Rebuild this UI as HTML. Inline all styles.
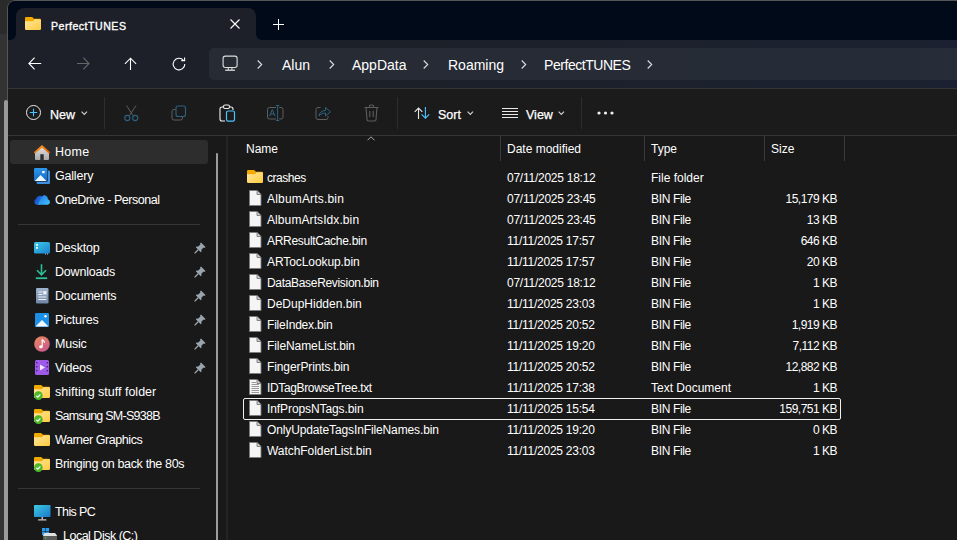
<!DOCTYPE html>
<html><head><meta charset="utf-8">
<style>
*{margin:0;padding:0;box-sizing:border-box}
html,body{width:957px;height:540px;overflow:hidden;background:#2b2b2b;font-family:"Liberation Sans",sans-serif;color:#fff}
.a{position:absolute}
svg{position:absolute;overflow:visible}
#outer2{left:0;top:34px;width:8px;height:506px;background:#333}
#win{left:7px;top:0;width:960px;height:560px;border:1px solid #555;border-radius:8px;background:#191919;overflow:hidden}
#title{left:8px;top:1px;width:949px;height:39px;background:#010a19;border-radius:7px 0 0 0}
#tab{left:16px;top:8px;width:240px;height:40px;background:#1d2029;border-radius:8px 8px 0 0}
#tabcorner1{left:8px;top:32px;width:8px;height:8px;background:#1d2029}
#tabcorner1 div{width:8px;height:8px;background:#010a19;border-radius:0 0 6px 0}
#tabcorner2{left:256px;top:32px;width:8px;height:8px;background:#1d2029}
#tabcorner2 div{width:8px;height:8px;background:#010a19;border-radius:0 0 0 6px}
#addrrow{left:8px;top:40px;width:949px;height:48px;background:linear-gradient(to right,#1d2029,#1c2029 40%,#1b2130)}
#sep1{left:8px;top:88px;width:949px;height:1px;background:#353535}
#cmd{left:8px;top:89px;width:949px;height:46px;background:#1b1b1b}
#sep2{left:8px;top:135px;width:949px;height:1px;background:#353535}
#addr{left:209px;top:48px;width:760px;height:32px;background:linear-gradient(to right,#262b34,#262b35 40%,#262c38);border-radius:5px}
.t14{font-size:14px;line-height:16px;white-space:nowrap}
.t12{font-size:12px;line-height:14px;white-space:nowrap}
.cb{-webkit-text-stroke:0.25px #fff}

.nt{left:55px;font-size:12.5px;letter-spacing:-0.2px;line-height:14px;white-space:nowrap;color:#fff}
.cd{letter-spacing:-0.25px}
.cs{letter-spacing:-0.5px}
.ct{font-size:12px;line-height:14px;white-space:nowrap;color:#fff}
</style></head><body>
<div class="a" id="outer2"></div>
<div class="a" id="win"></div>
<div class="a" id="title"></div>
<div class="a" id="tabcorner1"><div></div></div>
<div class="a" id="tabcorner2"><div></div></div>
<div class="a" id="tab"></div>
<div class="a" id="addrrow"></div>
<div class="a" id="sep1"></div>
<div class="a" id="cmd"></div>
<div class="a" id="sep2"></div>
<div class="a" id="addr"></div>

<!-- tab content -->
<svg style="left:25px;top:17px" width="16" height="13" viewBox="0 0 16 13"><defs><linearGradient id="fg" x1="0" y1="0" x2="1" y2="1"><stop offset="0" stop-color="#ffe7a0"/><stop offset="1" stop-color="#ffcb3d"/></linearGradient></defs><path d="M0 1.2A1.2 1.2 0 0 1 1.2 0H6.8A1 1 0 0 1 7.5 0.3L9 1.8H14.8A1.2 1.2 0 0 1 16 3V6H0Z" fill="#f2aa00"/><path d="M0 4.3H7.6A1 1 0 0 0 8.3 4L9.6 2.3H14.8A1.2 1.2 0 0 1 16 3.5V11.8A1.2 1.2 0 0 1 14.8 13H1.2A1.2 1.2 0 0 1 0 11.8Z" fill="url(#fg)"/></svg>
<div class="a t12" style="left:51px;top:18.5px;font-size:10.6px;letter-spacing:0.5px;-webkit-text-stroke:0.35px #fff">PerfectTUNES</div>
<svg style="left:230px;top:19px" width="10" height="10"><path d="M0.5 0.5L9.5 9.5M9.5 0.5L0.5 9.5" stroke="#fff" stroke-width="1.1"/></svg>
<svg style="left:273px;top:19px" width="12" height="12"><path d="M5.5 0V11M0 5.5H11" stroke="#fff" stroke-width="1"/></svg>

<!-- nav icons -->
<svg style="left:28px;top:57px" width="14" height="14"><path d="M13.2 6.5H1M6.6 0.6L0.9 6.5L6.6 12.4" stroke="#fff" stroke-width="1.1" fill="none"/></svg>
<svg style="left:77px;top:57px" width="14" height="14"><path d="M0 6.5H12.2M6.3 0.6L12 6.5L6.3 12.4" stroke="#666" stroke-width="1.1" fill="none"/></svg>
<svg style="left:124px;top:57px" width="14" height="14"><path d="M6.5 13V1.2M0.9 6.9L6.5 1.2L12.1 6.9" stroke="#fff" stroke-width="1.1" fill="none"/></svg>
<svg style="left:172px;top:57px" width="14" height="14"><path d="M11.4 3.3A5.8 5.8 0 1 0 12.8 7" stroke="#fff" stroke-width="1.1" fill="none"/><path d="M9.3 3.6H12.6V0.4" stroke="#fff" stroke-width="1.1" fill="none"/></svg>

<!-- address -->
<svg style="left:222px;top:55px" width="16" height="16"><rect x="1.1" y="1.1" width="14" height="11.4" rx="2.2" stroke="#ddd" stroke-width="1.1" fill="none"/><path d="M6.3 12.5V14.8M9.9 12.5V14.8" stroke="#ddd" stroke-width="1.1"/><path d="M3.2 15.2H13" stroke="#ddd" stroke-width="1.3"/></svg>
<svg style="left:257px;top:60px" width="6" height="10"><path d="M0.7 0.5L4.7 4.5L0.7 8.5" stroke="#ddd" stroke-width="1.1" fill="none"/></svg>
<div class="a t14" style="left:282px;top:57px">Alun</div>
<svg style="left:329px;top:60px" width="6" height="10"><path d="M0.7 0.5L4.7 4.5L0.7 8.5" stroke="#ddd" stroke-width="1.1" fill="none"/></svg>
<div class="a t14" style="left:352px;top:57px">AppData</div>
<svg style="left:423px;top:60px" width="6" height="10"><path d="M0.7 0.5L4.7 4.5L0.7 8.5" stroke="#ddd" stroke-width="1.1" fill="none"/></svg>
<div class="a t14" style="left:448px;top:57px">Roaming</div>
<svg style="left:521px;top:60px" width="6" height="10"><path d="M0.7 0.5L4.7 4.5L0.7 8.5" stroke="#ddd" stroke-width="1.1" fill="none"/></svg>
<div class="a t14" style="left:544px;top:57px;letter-spacing:-0.45px">PerfectTUNES</div>
<svg style="left:647px;top:60px" width="6" height="10"><path d="M0.7 0.5L4.7 4.5L0.7 8.5" stroke="#ddd" stroke-width="1.1" fill="none"/></svg>


<!-- command bar -->
<svg style="left:26px;top:105px" width="16" height="16"><circle cx="7.5" cy="7.5" r="7" stroke="#e8e8e8" stroke-width="1" fill="none"/><path d="M7.5 3.8V11.2M3.8 7.5H11.2" stroke="#4cc2ff" stroke-width="1.1"/></svg>
<div class="a t12" style="left:50px;top:108px;font-size:12.5px;-webkit-text-stroke:0.25px #fff">New</div>
<svg style="left:81px;top:111px" width="7" height="5"><path d="M0.6 0.6L3.3 3.3L6 0.6" stroke="#d0d0d0" stroke-width="1.2" fill="none"/></svg>
<div class="a" style="left:104px;top:97px;width:1px;height:32px;background:#2e2e2e"></div>
<svg style="left:124px;top:105px" width="15" height="17"><path d="M2.5 0.5L9 10.5M12 0.5L5.5 10.5" stroke="#5e5e5e" stroke-width="1" fill="none"/><circle cx="3.3" cy="13" r="2.6" stroke="#2d6283" stroke-width="1.1" fill="none"/><circle cx="11.2" cy="13" r="2.6" stroke="#2d6283" stroke-width="1.1" fill="none"/></svg>
<svg style="left:171px;top:105px" width="16" height="16"><path d="M4.5 4.5H3A2 2 0 0 0 1 6.5V13A2 2 0 0 0 3 15H9.5A2 2 0 0 0 11.5 13V12" stroke="#5e5e5e" stroke-width="1" fill="none"/><rect x="5" y="1" width="9.5" height="10.5" rx="2" stroke="#2d6283" stroke-width="1.1" fill="none"/></svg>
<svg style="left:219px;top:104px" width="17" height="18"><path d="M4 3H3A2 2 0 0 0 1 5V15A2 2 0 0 0 3 17H6M11 3H12A2 2 0 0 1 14 5V6" stroke="#f0f0f0" stroke-width="1.1" fill="none"/><rect x="4.5" y="1" width="6" height="3.5" rx="1.5" stroke="#f0f0f0" stroke-width="1.1" fill="none"/><rect x="7.5" y="7" width="8" height="10.2" rx="1.6" stroke="#4cc2ff" stroke-width="1.2" fill="none"/></svg>
<svg style="left:267px;top:105px" width="17" height="17"><path d="M9 2.5H2.5A2 2 0 0 0 0.5 4.5V12A2 2 0 0 0 2.5 14H9M12.3 2.5H14A2 2 0 0 1 16 4.5V12A2 2 0 0 1 14 14H12.3" stroke="#5e5e5e" stroke-width="1" fill="none"/><path d="M10.6 0.5V15.5M9 0.5H12.2M9 15.5H12.2M2.6 11.2L5.3 4.6L8 11.2M3.5 9H7.1" stroke="#2d6283" stroke-width="1" fill="none"/></svg>
<svg style="left:315px;top:105px" width="17" height="16"><path d="M5.5 2.5H3A2 2 0 0 0 1 4.5V12.5A2 2 0 0 0 3 14.5H11A2 2 0 0 0 13 12.5V11" stroke="#5e5e5e" stroke-width="1" fill="none"/><path d="M4 11C4.5 7.5 7 5.5 10.5 5.5V2.5L15.5 6.8L10.5 11V8C8 8 5.5 9 4 11Z" stroke="#2d6283" stroke-width="1" fill="none" stroke-linejoin="round"/></svg>
<svg style="left:364px;top:104px" width="15" height="18"><path d="M0.5 3.5H14.5M5.5 3.5V2A1 1 0 0 1 6.5 1H8.5A1 1 0 0 1 9.5 2V3.5M2 3.5L3 15.5A1.5 1.5 0 0 0 4.5 17H10.5A1.5 1.5 0 0 0 12 15.5L13 3.5M5.8 7V13M9.2 7V13" stroke="#5e5e5e" stroke-width="1.1" fill="none"/></svg>
<div class="a" style="left:397px;top:97px;width:1px;height:32px;background:#2e2e2e"></div>
<svg style="left:413px;top:107px" width="18" height="13"><path d="M5.5 12V1M1.7 4.8L5.5 1L9.3 4.8" stroke="#e8e8e8" stroke-width="1.1" fill="none"/><path d="M12.4 0V11.2M8.6 7.4L12.4 11.2L16.2 7.4" stroke="#4cc2ff" stroke-width="1.1" fill="none"/></svg>
<div class="a t12" style="left:438px;top:108px;font-size:12.5px;-webkit-text-stroke:0.25px #fff">Sort</div>
<svg style="left:467px;top:111px" width="7" height="5"><path d="M0.6 0.6L3.3 3.3L6 0.6" stroke="#d0d0d0" stroke-width="1.2" fill="none"/></svg>
<svg style="left:502px;top:107px" width="16" height="13"><path d="M0 1.5H16M0 4.5H16M0 7.5H16M0 10.5H16" stroke="#e8e8e8" stroke-width="1.1"/></svg>
<div class="a t12" style="left:526px;top:108px;font-size:12.5px;-webkit-text-stroke:0.25px #fff">View</div>
<svg style="left:558px;top:111px" width="7" height="5"><path d="M0.6 0.6L3.3 3.3L6 0.6" stroke="#d0d0d0" stroke-width="1.2" fill="none"/></svg>
<div class="a" style="left:581px;top:97px;width:1px;height:32px;background:#2e2e2e"></div>
<svg style="left:597px;top:111px" width="18" height="4"><circle cx="2" cy="2" r="1.6" fill="#f0f0f0"/><circle cx="8.5" cy="2" r="1.6" fill="#f0f0f0"/><circle cx="15" cy="2" r="1.6" fill="#f0f0f0"/></svg>

<!-- left edge bar -->
<div class="a" style="left:4px;top:100px;width:4px;height:440px;background:#9a9a9a;border-radius:2px 2px 0 0"></div>
<!-- nav pane -->
<div class="a" style="left:10px;top:140px;width:198px;height:24px;background:#2d2d2d;border-radius:3px"></div>
<div class="a" style="left:216px;top:153px;width:2px;height:390px;background:#9c9c9c;border-radius:1px"></div>
<div class="a" style="left:226px;top:136px;width:2px;height:404px;background:#242424"></div>
<div class="a" style="left:18px;top:224px;width:182px;height:1px;background:#363636"></div>
<div class="a" style="left:18px;top:488px;width:182px;height:1px;background:#363636"></div>
<div id="navtext">
<div class="a nt" style="top:145px;letter-spacing:0.3px">Home</div>
<div class="a nt" style="top:169px">Gallery</div>
<div class="a nt" style="top:193px;letter-spacing:-0.45px">OneDrive - Personal</div>
<div class="a nt" style="top:241px">Desktop</div>
<div class="a nt" style="top:265px">Downloads</div>
<div class="a nt" style="top:289px">Documents</div>
<div class="a nt" style="top:313px">Pictures</div>
<div class="a nt" style="top:337px">Music</div>
<div class="a nt" style="top:361px">Videos</div>
<div class="a nt" style="top:385px;letter-spacing:0px">shifting stuff folder</div>
<div class="a nt" style="top:409px;letter-spacing:-0.75px">Samsung SM-S938B</div>
<div class="a nt" style="top:433px;letter-spacing:-0.45px">Warner Graphics</div>
<div class="a nt" style="top:457px;letter-spacing:-0.35px">Bringing on back the 80s</div>
<div class="a nt" style="top:505px;letter-spacing:-0.6px">This PC</div>
<div class="a nt" style="top:529px;left:63px;letter-spacing:-0.5px">Local Disk (C:)</div>
</div>

<!-- content header -->
<svg style="left:367px;top:136px" width="8" height="5"><path d="M0.5 4.3L4 0.8L7.5 4.3" stroke="#aaa" stroke-width="1" fill="none"/></svg>
<div class="a ct" style="left:246px;top:142px">Name</div>
<div class="a" style="left:500px;top:136px;width:1px;height:25px;background:#3a3a3a"></div>
<div class="a ct" style="left:507px;top:142px">Date modified</div>
<div class="a" style="left:644px;top:136px;width:1px;height:25px;background:#3a3a3a"></div>
<div class="a ct" style="left:651px;top:142px">Type</div>
<div class="a" style="left:764px;top:136px;width:1px;height:25px;background:#3a3a3a"></div>
<div class="a ct" style="left:771px;top:142px">Size</div>
<div class="a" style="left:844px;top:136px;width:1px;height:25px;background:#3a3a3a"></div>
<div class="a" style="left:243px;top:398px;width:598px;height:22px;border:1.5px solid #f0f0f0;border-radius:2px"></div>
<div class="a ct" style="left:267px;top:171px;letter-spacing:-0.45px">crashes</div><div class="a ct cd" style="left:507px;top:171px">07/11/2025 18:12</div><div class="a ct" style="left:651px;top:171px">File folder</div><div class="a ct cs" style="right:120px;top:171px"></div>
<div class="a ct" style="left:267px;top:192px;letter-spacing:0.18px">AlbumArts.bin</div><div class="a ct cd" style="left:507px;top:192px">07/11/2025 23:45</div><div class="a ct" style="left:651px;top:192px;letter-spacing:-0.35px">BIN File</div><div class="a ct cs" style="right:120px;top:192px">15,179 KB</div>
<div class="a ct" style="left:267px;top:213px;letter-spacing:0.09px">AlbumArtsIdx.bin</div><div class="a ct cd" style="left:507px;top:213px">07/11/2025 23:45</div><div class="a ct" style="left:651px;top:213px;letter-spacing:-0.35px">BIN File</div><div class="a ct cs" style="right:120px;top:213px">13 KB</div>
<div class="a ct" style="left:267px;top:234px;letter-spacing:-0.29px">ARResultCache.bin</div><div class="a ct cd" style="left:507px;top:234px">11/11/2025 17:57</div><div class="a ct" style="left:651px;top:234px;letter-spacing:-0.35px">BIN File</div><div class="a ct cs" style="right:120px;top:234px">646 KB</div>
<div class="a ct" style="left:267px;top:255px;letter-spacing:-0.08px">ARTocLookup.bin</div><div class="a ct cd" style="left:507px;top:255px">11/11/2025 17:57</div><div class="a ct" style="left:651px;top:255px;letter-spacing:-0.35px">BIN File</div><div class="a ct cs" style="right:120px;top:255px">20 KB</div>
<div class="a ct" style="left:267px;top:276px;letter-spacing:-0.32px">DataBaseRevision.bin</div><div class="a ct cd" style="left:507px;top:276px">07/11/2025 18:12</div><div class="a ct" style="left:651px;top:276px;letter-spacing:-0.35px">BIN File</div><div class="a ct cs" style="right:120px;top:276px">1 KB</div>
<div class="a ct" style="left:267px;top:297px">DeDupHidden.bin</div><div class="a ct cd" style="left:507px;top:297px">11/11/2025 23:03</div><div class="a ct" style="left:651px;top:297px;letter-spacing:-0.35px">BIN File</div><div class="a ct cs" style="right:120px;top:297px">1 KB</div>
<div class="a ct" style="left:267px;top:318px;letter-spacing:-0.2px">FileIndex.bin</div><div class="a ct cd" style="left:507px;top:318px">11/11/2025 20:52</div><div class="a ct" style="left:651px;top:318px;letter-spacing:-0.35px">BIN File</div><div class="a ct cs" style="right:120px;top:318px">1,919 KB</div>
<div class="a ct" style="left:267px;top:339px;letter-spacing:-0.09px">FileNameList.bin</div><div class="a ct cd" style="left:507px;top:339px">11/11/2025 19:20</div><div class="a ct" style="left:651px;top:339px;letter-spacing:-0.35px">BIN File</div><div class="a ct cs" style="right:120px;top:339px">7,112 KB</div>
<div class="a ct" style="left:267px;top:360px;letter-spacing:-0.1px">FingerPrints.bin</div><div class="a ct cd" style="left:507px;top:360px">11/11/2025 20:52</div><div class="a ct" style="left:651px;top:360px;letter-spacing:-0.35px">BIN File</div><div class="a ct cs" style="right:120px;top:360px">12,882 KB</div>
<div class="a ct" style="left:267px;top:381px;letter-spacing:-0.36px">IDTagBrowseTree.txt</div><div class="a ct cd" style="left:507px;top:381px">11/11/2025 17:38</div><div class="a ct" style="left:651px;top:381px">Text Document</div><div class="a ct cs" style="right:120px;top:381px">1 KB</div>
<div class="a ct" style="left:267px;top:402px;letter-spacing:-0.09px">InfPropsNTags.bin</div><div class="a ct cd" style="left:507px;top:402px">11/11/2025 15:54</div><div class="a ct" style="left:651px;top:402px;letter-spacing:-0.35px">BIN File</div><div class="a ct cs" style="right:120px;top:402px">159,751 KB</div>
<div class="a ct" style="left:267px;top:423px;letter-spacing:-0.125px">OnlyUpdateTagsInFileNames.bin</div><div class="a ct cd" style="left:507px;top:423px">11/11/2025 19:20</div><div class="a ct" style="left:651px;top:423px;letter-spacing:-0.35px">BIN File</div><div class="a ct cs" style="right:120px;top:423px">0 KB</div>
<div class="a ct" style="left:267px;top:444px;letter-spacing:-0.05px">WatchFolderList.bin</div><div class="a ct cd" style="left:507px;top:444px">11/11/2025 23:03</div><div class="a ct" style="left:651px;top:444px;letter-spacing:-0.35px">BIN File</div><div class="a ct cs" style="right:120px;top:444px">1 KB</div>

<!-- nav icons -->
<svg style="left:34px;top:145px" width="16" height="16" viewBox="0 0 16 16">
 <defs><linearGradient id="hg" x1="0" y1="0" x2="0" y2="1"><stop offset="0" stop-color="#e0e0e0"/><stop offset="1" stop-color="#a8a8a8"/></linearGradient></defs>
 <path d="M1 7.8L8 2L15 7.8V14A1 1 0 0 1 14 15H9.7V9.2H6.3V15H2A1 1 0 0 1 1 14Z" fill="url(#hg)"/>
 <defs><linearGradient id="rg" x1="0" y1="0" x2="1" y2="1"><stop offset="0" stop-color="#ff9d1a"/><stop offset="1" stop-color="#ea5a08"/></linearGradient></defs><path d="M1 7.4L8 1.2L15 7.4" stroke="url(#rg)" stroke-width="1.9" fill="none" stroke-linecap="round" stroke-linejoin="round"/>
</svg>
<svg style="left:34px;top:168px" width="16" height="16" viewBox="0 0 16 16">
 <defs><linearGradient id="gg" x1="0" y1="0" x2="0" y2="1"><stop offset="0" stop-color="#2d98ea"/><stop offset="1" stop-color="#1466c6"/></linearGradient></defs>
 <rect x="2.6" y="2.6" width="13.4" height="13.4" rx="1.2" fill="#3d8fe0"/>
 <rect x="-0.5" y="-0.5" width="14.3" height="14.3" rx="1.6" fill="#1b1b1b"/>
 <rect x="0" y="0" width="13.3" height="13.3" rx="1.2" fill="url(#gg)"/>
 <path d="M0.8 13L6.6 7L12.5 13Z" fill="#eef6ff"/>
 <rect x="8.2" y="3" width="2.4" height="2.2" fill="#fff"/>
</svg>
<svg style="left:34px;top:194px" width="17" height="11" viewBox="0 0 17 11">
 <defs><linearGradient id="og1" x1="0" y1="0" x2="1" y2="0.6"><stop offset="0" stop-color="#0c3fb8"/><stop offset="1" stop-color="#2f7fe8"/></linearGradient>
 <linearGradient id="og2" x1="0" y1="0" x2="1" y2="1"><stop offset="0" stop-color="#1e74e0"/><stop offset="1" stop-color="#42c6ff"/></linearGradient></defs>
 <path d="M3.2 10.8A3.1 3.1 0 0 1 1.8 5A4.2 4.2 0 0 1 9 3.2L6 10.8Z" fill="url(#og1)"/>
 <path d="M4 10.8C5.5 8 6.5 3.5 9.8 1A4.6 4.6 0 0 1 13.9 5.2A2.9 2.9 0 0 1 13.8 10.8Z" fill="url(#og2)"/>
</svg>
<svg style="left:34px;top:242px" width="16" height="13" viewBox="0 0 16 13">
 <defs><linearGradient id="dg" x1="0" y1="0" x2="1" y2="1"><stop offset="0" stop-color="#3ccbe8"/><stop offset="1" stop-color="#1a7fd0"/></linearGradient></defs>
 <rect x="0" y="0" width="16" height="11.5" rx="1.5" fill="url(#dg)"/>
 <rect x="2" y="2" width="2" height="1.8" fill="#e8f8ff"/><rect x="2" y="5" width="2" height="1.8" fill="#e8f8ff"/>
 <rect x="11" y="11.5" width="1" height="1" fill="#ccc"/><rect x="13" y="11.5" width="1" height="1" fill="#ccc"/>
</svg>
<svg style="left:35px;top:264px" width="14" height="15" viewBox="0 0 14 15">
 <path d="M6.5 0.3V10.8M2 6.3L6.5 10.8L11 6.3" stroke="#2bbf98" stroke-width="1.6" fill="none"/>
 <path d="M0.8 14.2H12.2" stroke="#2bbf98" stroke-width="1.8"/>
</svg>
<svg style="left:36px;top:288px" width="13" height="16" viewBox="0 0 13 16">
 <defs><linearGradient id="docg" x1="0" y1="0" x2="0" y2="1"><stop offset="0" stop-color="#9fb4cc"/><stop offset="1" stop-color="#6f88a6"/></linearGradient></defs>
 <rect x="0" y="0" width="12.5" height="15.5" rx="1.2" fill="url(#docg)"/>
 <path d="M2.3 4H6.5M2.3 6.5H6.5M2.3 9H10.3M2.3 11.5H10.3" stroke="#eef2f6" stroke-width="1"/>
 <rect x="7.3" y="3" width="3.2" height="3.5" fill="#eef2f6"/>
</svg>
<svg style="left:35px;top:313px" width="14" height="14" viewBox="0 0 14 14">
 <rect x="0" y="0" width="14" height="14" rx="1.3" fill="#1e8fe6"/>
 <path d="M0.5 13.5L7 7L13.5 13.5Z" fill="#f2f8ff"/>
 <circle cx="10.5" cy="3.2" r="1.2" fill="#fff"/>
</svg>
<svg style="left:34px;top:336px" width="16" height="16" viewBox="0 0 16 16">
 <defs><linearGradient id="mg" x1="0" y1="0" x2="0.7" y2="1"><stop offset="0" stop-color="#ee8a5c"/><stop offset="1" stop-color="#c95a8a"/></linearGradient></defs>
 <circle cx="8" cy="8" r="7.8" fill="url(#mg)"/>
 <path d="M8.2 3.5V10.5" stroke="#fff" stroke-width="1.2"/>
 <path d="M8.2 3.5C9 4.5 10.5 5 10.5 6.8" stroke="#fff" stroke-width="1.2" fill="none"/>
 <ellipse cx="6.9" cy="10.8" rx="1.8" ry="1.5" fill="#fff"/>
</svg>
<svg style="left:35px;top:360px" width="14" height="15" viewBox="0 0 14 15">
 <rect x="0" y="0" width="14" height="15" rx="1.5" fill="#9f5ae8"/>
 <rect x="1" y="2" width="1.4" height="1.4" fill="#4a1e8a"/><rect x="1" y="6" width="1.4" height="1.4" fill="#4a1e8a"/><rect x="1" y="10" width="1.4" height="1.4" fill="#4a1e8a"/>
 <rect x="11.6" y="2" width="1.4" height="1.4" fill="#4a1e8a"/><rect x="11.6" y="6" width="1.4" height="1.4" fill="#4a1e8a"/><rect x="11.6" y="10" width="1.4" height="1.4" fill="#4a1e8a"/>
 <path d="M5 4.5L10 7.5L5 10.5Z" fill="#f0e8ff"/>
</svg>
<svg style="left:34px;top:385px" width="16" height="13" viewBox="0 0 16 13"><path d="M0 1.2A1.2 1.2 0 0 1 1.2 0H6.8A1 1 0 0 1 7.5 0.3L9 1.8H14.8A1.2 1.2 0 0 1 16 3V6H0Z" fill="#f2aa00"/><path d="M0 4.3H7.6A1 1 0 0 0 8.3 4L9.6 2.3H14.8A1.2 1.2 0 0 1 16 3.5V11.8A1.2 1.2 0 0 1 14.8 13H1.2A1.2 1.2 0 0 1 0 11.8Z" fill="url(#fg)"/><circle cx="4.4" cy="10.6" r="4.3" fill="#4cb82a"/><path d="M2.4 10.7L3.9 12.1L6.4 9.3" stroke="#fff" stroke-width="1.2" fill="none"/></svg>
<svg style="left:34px;top:409px" width="16" height="13" viewBox="0 0 16 13"><path d="M0 1.2A1.2 1.2 0 0 1 1.2 0H6.8A1 1 0 0 1 7.5 0.3L9 1.8H14.8A1.2 1.2 0 0 1 16 3V6H0Z" fill="#f2aa00"/><path d="M0 4.3H7.6A1 1 0 0 0 8.3 4L9.6 2.3H14.8A1.2 1.2 0 0 1 16 3.5V11.8A1.2 1.2 0 0 1 14.8 13H1.2A1.2 1.2 0 0 1 0 11.8Z" fill="url(#fg)"/><circle cx="4.4" cy="10.6" r="4.3" fill="#4cb82a"/><path d="M2.4 10.7L3.9 12.1L6.4 9.3" stroke="#fff" stroke-width="1.2" fill="none"/></svg>
<svg style="left:34px;top:433px" width="16" height="13" viewBox="0 0 16 13"><path d="M0 1.2A1.2 1.2 0 0 1 1.2 0H6.8A1 1 0 0 1 7.5 0.3L9 1.8H14.8A1.2 1.2 0 0 1 16 3V6H0Z" fill="#f2aa00"/><path d="M0 4.3H7.6A1 1 0 0 0 8.3 4L9.6 2.3H14.8A1.2 1.2 0 0 1 16 3.5V11.8A1.2 1.2 0 0 1 14.8 13H1.2A1.2 1.2 0 0 1 0 11.8Z" fill="url(#fg)"/></svg>
<svg style="left:34px;top:457px" width="16" height="13" viewBox="0 0 16 13"><path d="M0 1.2A1.2 1.2 0 0 1 1.2 0H6.8A1 1 0 0 1 7.5 0.3L9 1.8H14.8A1.2 1.2 0 0 1 16 3V6H0Z" fill="#f2aa00"/><path d="M0 4.3H7.6A1 1 0 0 0 8.3 4L9.6 2.3H14.8A1.2 1.2 0 0 1 16 3.5V11.8A1.2 1.2 0 0 1 14.8 13H1.2A1.2 1.2 0 0 1 0 11.8Z" fill="url(#fg)"/><circle cx="4.4" cy="10.6" r="4.3" fill="#4cb82a"/><path d="M2.4 10.7L3.9 12.1L6.4 9.3" stroke="#fff" stroke-width="1.2" fill="none"/></svg>

<svg style="left:34px;top:505px" width="17" height="16" viewBox="0 0 17 16">
 <defs><linearGradient id="pcg" x1="0" y1="0" x2="1" y2="1"><stop offset="0" stop-color="#3dcbe0"/><stop offset="1" stop-color="#1a78cc"/></linearGradient></defs>
 <rect x="0" y="0" width="16.5" height="12" rx="0.8" fill="url(#pcg)"/>
 <rect x="7.5" y="12" width="1.5" height="2.5" fill="#bbb"/><rect x="4" y="14.3" width="8.5" height="1.3" rx="0.6" fill="#ccc"/>
</svg>
<svg style="left:42px;top:528px" width="16" height="12" viewBox="0 0 16 12">
 <rect x="0" y="0" width="3.3" height="3.3" fill="#2b9bf0"/><rect x="3.8" y="0" width="3.3" height="3.3" fill="#2b9bf0"/><rect x="0" y="3.8" width="3.3" height="3.3" fill="#2b9bf0"/><rect x="3.8" y="3.8" width="3.3" height="3.3" fill="#2b9bf0"/>
 <path d="M2.5 5H13L15 7.5V12H1V7.5Z" fill="#e0e0e0"/><rect x="1" y="8" width="14" height="4" fill="#5a5a5a"/><rect x="3" y="9.3" width="1.3" height="1.2" fill="#3d3"/>
</svg>
<svg style="left:194px;top:242px" width="12" height="12" viewBox="0 0 12 12"><path d="M7 0.5L11.5 5L10.5 6L9.5 5.6L7.4 7.7L7.5 9.5L6.8 10.2L1.8 5.2L2.5 4.5L4.3 4.6L6.4 2.5L6 1.5Z" fill="#9aa5ad"/><path d="M4.2 7.8L0.6 11.4" stroke="#9aa5ad" stroke-width="1.3"/></svg>
<svg style="left:194px;top:266px" width="12" height="12" viewBox="0 0 12 12"><path d="M7 0.5L11.5 5L10.5 6L9.5 5.6L7.4 7.7L7.5 9.5L6.8 10.2L1.8 5.2L2.5 4.5L4.3 4.6L6.4 2.5L6 1.5Z" fill="#9aa5ad"/><path d="M4.2 7.8L0.6 11.4" stroke="#9aa5ad" stroke-width="1.3"/></svg>
<svg style="left:194px;top:290px" width="12" height="12" viewBox="0 0 12 12"><path d="M7 0.5L11.5 5L10.5 6L9.5 5.6L7.4 7.7L7.5 9.5L6.8 10.2L1.8 5.2L2.5 4.5L4.3 4.6L6.4 2.5L6 1.5Z" fill="#9aa5ad"/><path d="M4.2 7.8L0.6 11.4" stroke="#9aa5ad" stroke-width="1.3"/></svg>
<svg style="left:194px;top:314px" width="12" height="12" viewBox="0 0 12 12"><path d="M7 0.5L11.5 5L10.5 6L9.5 5.6L7.4 7.7L7.5 9.5L6.8 10.2L1.8 5.2L2.5 4.5L4.3 4.6L6.4 2.5L6 1.5Z" fill="#9aa5ad"/><path d="M4.2 7.8L0.6 11.4" stroke="#9aa5ad" stroke-width="1.3"/></svg>
<svg style="left:194px;top:338px" width="12" height="12" viewBox="0 0 12 12"><path d="M7 0.5L11.5 5L10.5 6L9.5 5.6L7.4 7.7L7.5 9.5L6.8 10.2L1.8 5.2L2.5 4.5L4.3 4.6L6.4 2.5L6 1.5Z" fill="#9aa5ad"/><path d="M4.2 7.8L0.6 11.4" stroke="#9aa5ad" stroke-width="1.3"/></svg>
<svg style="left:194px;top:362px" width="12" height="12" viewBox="0 0 12 12"><path d="M7 0.5L11.5 5L10.5 6L9.5 5.6L7.4 7.7L7.5 9.5L6.8 10.2L1.8 5.2L2.5 4.5L4.3 4.6L6.4 2.5L6 1.5Z" fill="#9aa5ad"/><path d="M4.2 7.8L0.6 11.4" stroke="#9aa5ad" stroke-width="1.3"/></svg>
<svg style="left:247px;top:170px" width="16" height="13" viewBox="0 0 16 13"><path d="M0 1.2A1.2 1.2 0 0 1 1.2 0H6.8A1 1 0 0 1 7.5 0.3L9 1.8H14.8A1.2 1.2 0 0 1 16 3V6H0Z" fill="#f2aa00"/><path d="M0 4.3H7.6A1 1 0 0 0 8.3 4L9.6 2.3H14.8A1.2 1.2 0 0 1 16 3.5V11.8A1.2 1.2 0 0 1 14.8 13H1.2A1.2 1.2 0 0 1 0 11.8Z" fill="url(#fg)"/></svg>
<svg style="left:249px;top:190px" width="13" height="16" viewBox="0 0 13 16"><path d="M0.5 0.5H8L12 4.5V15.5H0.5Z" fill="#f5f5f5" stroke="#7a7a7a" stroke-width="0.9"/><path d="M8 0.5V4.5H12" fill="#c8c8c8" stroke="#7a7a7a" stroke-width="0.9"/></svg>
<svg style="left:249px;top:211px" width="13" height="16" viewBox="0 0 13 16"><path d="M0.5 0.5H8L12 4.5V15.5H0.5Z" fill="#f5f5f5" stroke="#7a7a7a" stroke-width="0.9"/><path d="M8 0.5V4.5H12" fill="#c8c8c8" stroke="#7a7a7a" stroke-width="0.9"/></svg>
<svg style="left:249px;top:232px" width="13" height="16" viewBox="0 0 13 16"><path d="M0.5 0.5H8L12 4.5V15.5H0.5Z" fill="#f5f5f5" stroke="#7a7a7a" stroke-width="0.9"/><path d="M8 0.5V4.5H12" fill="#c8c8c8" stroke="#7a7a7a" stroke-width="0.9"/></svg>
<svg style="left:249px;top:253px" width="13" height="16" viewBox="0 0 13 16"><path d="M0.5 0.5H8L12 4.5V15.5H0.5Z" fill="#f5f5f5" stroke="#7a7a7a" stroke-width="0.9"/><path d="M8 0.5V4.5H12" fill="#c8c8c8" stroke="#7a7a7a" stroke-width="0.9"/></svg>
<svg style="left:249px;top:274px" width="13" height="16" viewBox="0 0 13 16"><path d="M0.5 0.5H8L12 4.5V15.5H0.5Z" fill="#f5f5f5" stroke="#7a7a7a" stroke-width="0.9"/><path d="M8 0.5V4.5H12" fill="#c8c8c8" stroke="#7a7a7a" stroke-width="0.9"/></svg>
<svg style="left:249px;top:295px" width="13" height="16" viewBox="0 0 13 16"><path d="M0.5 0.5H8L12 4.5V15.5H0.5Z" fill="#f5f5f5" stroke="#7a7a7a" stroke-width="0.9"/><path d="M8 0.5V4.5H12" fill="#c8c8c8" stroke="#7a7a7a" stroke-width="0.9"/></svg>
<svg style="left:249px;top:316px" width="13" height="16" viewBox="0 0 13 16"><path d="M0.5 0.5H8L12 4.5V15.5H0.5Z" fill="#f5f5f5" stroke="#7a7a7a" stroke-width="0.9"/><path d="M8 0.5V4.5H12" fill="#c8c8c8" stroke="#7a7a7a" stroke-width="0.9"/></svg>
<svg style="left:249px;top:337px" width="13" height="16" viewBox="0 0 13 16"><path d="M0.5 0.5H8L12 4.5V15.5H0.5Z" fill="#f5f5f5" stroke="#7a7a7a" stroke-width="0.9"/><path d="M8 0.5V4.5H12" fill="#c8c8c8" stroke="#7a7a7a" stroke-width="0.9"/></svg>
<svg style="left:249px;top:358px" width="13" height="16" viewBox="0 0 13 16"><path d="M0.5 0.5H8L12 4.5V15.5H0.5Z" fill="#f5f5f5" stroke="#7a7a7a" stroke-width="0.9"/><path d="M8 0.5V4.5H12" fill="#c8c8c8" stroke="#7a7a7a" stroke-width="0.9"/></svg>
<svg style="left:249px;top:379px" width="13" height="16" viewBox="0 0 13 16"><path d="M0.5 0.5H8L12 4.5V15.5H0.5Z" fill="#f5f5f5" stroke="#7a7a7a" stroke-width="0.9"/><path d="M8 0.5V4.5H12" fill="#c8c8c8" stroke="#7a7a7a" stroke-width="0.9"/><path d="M2.5 3.5H7M2.5 5.5H10M2.5 7.5H10M2.5 9.5H10M2.5 11.5H10M2.5 13.5H10" stroke="#9a9a9a" stroke-width="1"/></svg>
<svg style="left:249px;top:400px" width="13" height="16" viewBox="0 0 13 16"><path d="M0.5 0.5H8L12 4.5V15.5H0.5Z" fill="#f5f5f5" stroke="#7a7a7a" stroke-width="0.9"/><path d="M8 0.5V4.5H12" fill="#c8c8c8" stroke="#7a7a7a" stroke-width="0.9"/></svg>
<svg style="left:249px;top:421px" width="13" height="16" viewBox="0 0 13 16"><path d="M0.5 0.5H8L12 4.5V15.5H0.5Z" fill="#f5f5f5" stroke="#7a7a7a" stroke-width="0.9"/><path d="M8 0.5V4.5H12" fill="#c8c8c8" stroke="#7a7a7a" stroke-width="0.9"/></svg>
<svg style="left:249px;top:442px" width="13" height="16" viewBox="0 0 13 16"><path d="M0.5 0.5H8L12 4.5V15.5H0.5Z" fill="#f5f5f5" stroke="#7a7a7a" stroke-width="0.9"/><path d="M8 0.5V4.5H12" fill="#c8c8c8" stroke="#7a7a7a" stroke-width="0.9"/></svg>
</body></html>
